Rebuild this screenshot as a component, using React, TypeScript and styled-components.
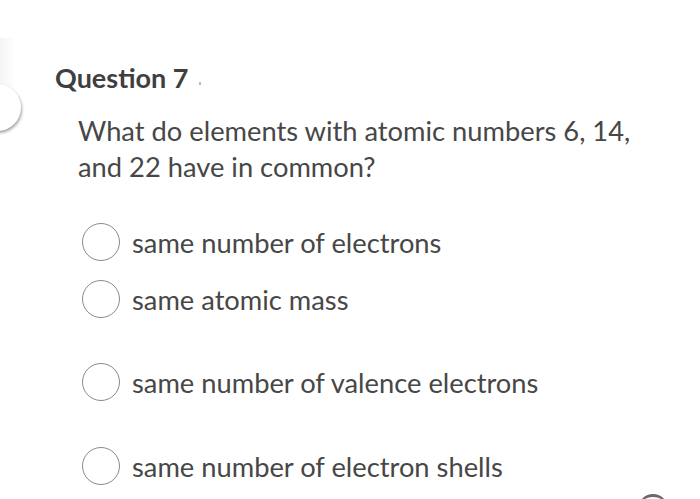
import React from "react";
import styled, { createGlobalStyle } from "styled-components";

const GlobalStyle = createGlobalStyle`
  html, body {
    margin: 0;
    padding: 0;
    background: #ffffff;
  }
  body {
    font-family: Lato, "Open Sans", sans-serif;
    color: #474747;
  }
`;

const options = [
  { label: "same number of electrons", space: 0 },
  { label: "same atomic mass", space: 19 },
  { label: "same number of valence electrons", space: 45 },
  { label: "same number of electron shells", space: 46 },
];

const App = () => {
  return (
    <Page>
      <GlobalStyle />
      <EdgeShade />
      <SideTab />
      <BottomTab />
      <Header>
        <h2>Question 7</h2>
        <Speck />
      </Header>
      <Prompt>
        What do elements with atomic numbers 6, 14,
        <br />
        and 22 have in common?
      </Prompt>
      <Options>
        {options.map((o) => (
          <Option key={o.label} $space={o.space}>
            <Radio />
            <span>{o.label}</span>
          </Option>
        ))}
      </Options>
    </Page>
  );
};

const Page = styled.div`
  position: relative;
  width: 700px;
  height: 499px;
  overflow: hidden;
  background: #fff;
`;

const EdgeShade = styled.div`
  position: absolute;
  left: 0;
  top: 38px;
  width: 16px;
  height: 50px;
  background: linear-gradient(to right, rgba(0, 0, 0, 0.045), rgba(0, 0, 0, 0));
`;

const SideTab = styled.div`
  position: absolute;
  left: -26px;
  top: 84px;
  width: 47px;
  height: 47px;
  border-radius: 50%;
  background: #fff;
  box-shadow: 1px 2px 3px rgba(0, 0, 0, 0.35);
`;

const BottomTab = styled.div`
  position: absolute;
  left: 637px;
  top: 494px;
  width: 32px;
  height: 32px;
  border-radius: 50%;
  background: #fff;
  border-top: 3px solid #6a6a6a;
`;

const Header = styled.div`
  display: flex;
  align-items: center;
  padding: 62px 0 0 55px;
  h2 {
    margin: 0;
    font-size: 27px;
    line-height: 32px;
    font-weight: 700;
    color: #3f3f3f;
  }
`;

const Speck = styled.span`
  width: 2px;
  height: 3px;
  margin: 10px 0 0 10px;
  background: #bbb;
`;

const Prompt = styled.p`
  margin: 19px 0 0 78px;
  font-size: 27.3px;
  line-height: 36px;
`;

const Options = styled.div`
  display: flex;
  flex-direction: column;
  margin: 38px 0 0 82px;
`;

const Option = styled.label<{ $space: number }>`
  display: flex;
  align-items: center;
  gap: 12px;
  margin-top: ${(p) => p.$space}px;
  height: 38px;
  font-size: 27.3px;
`;

const Radio = styled.span`
  flex: none;
  box-sizing: border-box;
  width: 38px;
  height: 38px;
  border-radius: 50%;
  border: 1.5px solid #8a8a8a;
  background: #fff;
`;

export default App;
